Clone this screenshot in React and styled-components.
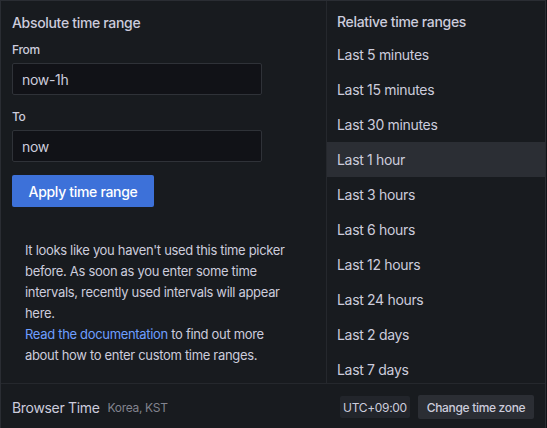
import React from 'react'
import styled, { createGlobalStyle } from 'styled-components'

const GlobalStyle = createGlobalStyle`
  * { box-sizing: border-box; }
  html, body {
    margin: 0;
    padding: 0;
    background: #111217;
  }
  body {
    font-family: Inter, "Noto Sans", sans-serif;
    letter-spacing: -0.02em;
    color: #ccccdc;
    -webkit-font-smoothing: antialiased;
  }
`

const ranges = [
  'Last 5 minutes',
  'Last 15 minutes',
  'Last 30 minutes',
  'Last 1 hour',
  'Last 3 hours',
  'Last 6 hours',
  'Last 12 hours',
  'Last 24 hours',
  'Last 2 days',
  'Last 7 days',
  'Last 30 days',
  'Last 90 days',
]

const App = () => (
  <>
    <GlobalStyle />
    <Picker>
      <Body>
        <LeftPane>
          <Title>Absolute time range</Title>
          <Field>
            <Label>From</Label>
            <Input defaultValue="now-1h" />
          </Field>
          <Field>
            <Label>To</Label>
            <Input defaultValue="now" />
          </Field>
          <ApplyButton>Apply time range</ApplyButton>
          <Help>
            It looks like you haven&apos;t used this time picker before. As soon as you enter
            some time intervals, recently used intervals will appear here.
            <br />
            <Link href="#">Read the documentation</Link> to find out more about how to enter
            custom time ranges.
          </Help>
        </LeftPane>

        <RightPane>
          <RightTitle>Relative time ranges</RightTitle>
          <List>
            {ranges.map((r) => (
              <Item key={r} active={r === 'Last 1 hour'}>
                {r}
              </Item>
            ))}
          </List>
        </RightPane>
      </Body>

      <Footer>
        <ZoneName>Browser Time</ZoneName>
        <ZoneDetail>Korea, KST</ZoneDetail>
        <Spacer />
        <Offset>UTC+09:00</Offset>
        <ChangeButton>Change time zone</ChangeButton>
      </Footer>
    </Picker>
  </>
)

export default App

const Picker = styled.div`
  width: 546px;
  height: 440px;
  background: #181b1f;
  border: 1px solid #2a2d33;
  display: flex;
  flex-direction: column;
`

const Body = styled.div`
  display: flex;
  height: 383px;
  border-bottom: 1px solid #25282d;
`

const LeftPane = styled.div`
  width: 326px;
  padding: 12px 11px 0;
  border-right: 1px solid #25282d;
`

const Title = styled.div`
  font-size: 14px;
  font-weight: 500;
  line-height: 20px;
  margin-bottom: 8px;
`

const Field = styled.div`
  margin-bottom: 13px;
`

const Label = styled.div`
  font-size: 12px;
  font-weight: 500;
  line-height: 18px;
  margin-bottom: 4px;
`

const Input = styled.input`
  display: block;
  width: 250px;
  height: 32px;
  padding: 0 9px;
  background: #111217;
  border: 1px solid #2f3238;
  border-radius: 2px;
  color: #ccccdc;
  font-family: inherit;
  letter-spacing: inherit;
  font-size: 14px;
  outline: none;
`

const ApplyButton = styled.button`
  display: block;
  margin-top: 5px;
  height: 32px;
  width: 142px;
  padding: 0;
  background: #3d71d9;
  border: none;
  border-radius: 2px;
  color: #ffffff;
  font-family: inherit;
  letter-spacing: inherit;
  font-size: 14px;
  font-weight: 500;
`

const Help = styled.p`
  margin: 33px 0 0 13px;
  width: 272px;
  font-size: 13px;
  line-height: 21px;
  color: #ccccdc;
`

const Link = styled.a`
  color: #6e9fff;
  text-decoration: none;
`

const RightPane = styled.div`
  flex: 1;
  display: flex;
  flex-direction: column;
  overflow: hidden;
`

const RightTitle = styled.div`
  padding: 11px 10px 0;
  height: 36px;
  font-size: 14px;
  font-weight: 500;
  line-height: 20px;
`

const List = styled.div`
  flex: 1;
  overflow: hidden;
`

const Item = styled.div`
  height: 35px;
  padding: 0 10px;
  display: flex;
  align-items: center;
  font-size: 14px;
  background: ${(p) => (p.active ? '#2b2e34' : 'transparent')};
`

const Footer = styled.div`
  display: flex;
  align-items: center;
  padding: 11px 11px 11px;
`

const ZoneName = styled.span`
  font-size: 14px;
`

const ZoneDetail = styled.span`
  margin-left: 8px;
  font-size: 12px;
  color: rgba(204, 204, 220, 0.6);
`

const Spacer = styled.div`
  flex: 1;
`

const Offset = styled.span`
  height: 22px;
  width: 70px;
  display: flex;
  align-items: center;
  justify-content: center;
  background: #22252b;
  border-radius: 2px;
  font-size: 12px;
`

const ChangeButton = styled.button`
  margin-left: 8px;
  height: 24px;
  width: 116px;
  padding: 0;
  background: #2b2e34;
  border: none;
  border-radius: 2px;
  color: #ccccdc;
  font-family: inherit;
  letter-spacing: inherit;
  font-size: 12px;
  font-weight: 500;
`
